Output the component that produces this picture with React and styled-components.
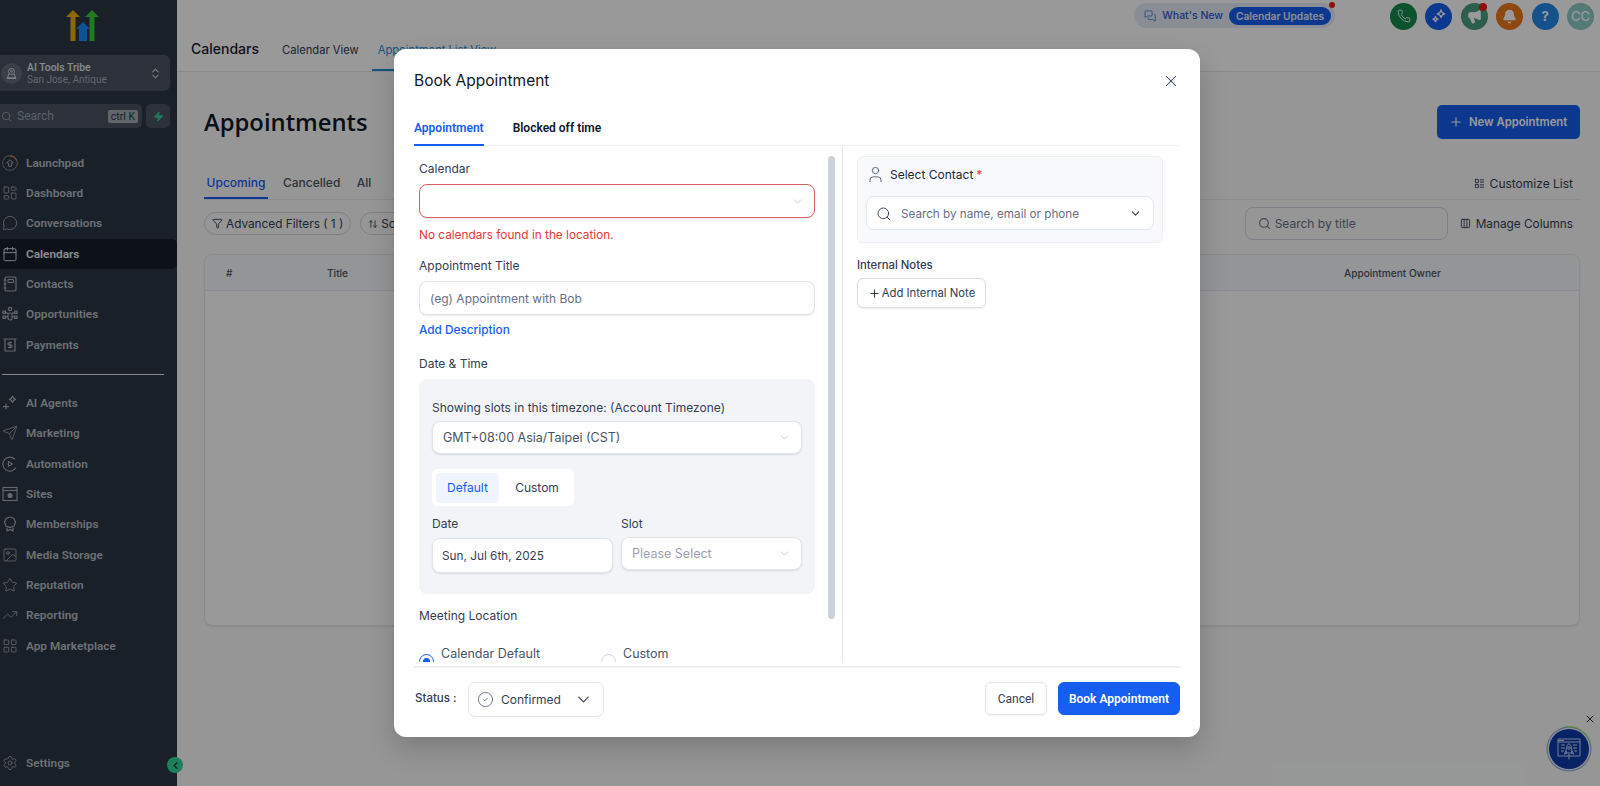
import React from "react";
import styled, { createGlobalStyle } from "styled-components";
import {
  LayoutDashboard, MessageCircle, Calendar, Send, Image as ImageIcon, Star, TrendingUp,
  LayoutGrid, Settings, ChevronsUpDown, Search, Zap, X, ChevronDown, ChevronLeft, Plus, User,
  CircleCheck, Phone, Megaphone, Bell, Filter, ArrowUpDown, Columns3, LayoutList, MessagesSquare,
} from "lucide-react";

const Global = createGlobalStyle`
  html, body { margin: 0; padding: 0; height: 100%; background: #fff; }
  body { font-family: Inter, "Liberation Sans", sans-serif; overflow: hidden; }
  * { box-sizing: border-box; }
`;

const Page = styled.div`
  position: relative;
  display: flex;
  width: 1600px;
  height: 786px;
  overflow: hidden;
  background: #fafbfb;
`;

/* ---------- Sidebar ---------- */
const Side = styled.aside`
  position: relative;
  flex: 0 0 177px;
  display: flex;
  flex-direction: column;
  background: #2b3644;
  font-family: Roboto, sans-serif;
`;
const LogoWrap = styled.div`
  height: 55px;
  padding: 10px 0 0 66px;
`;
const LocationCard = styled.div`
  display: flex;
  align-items: center;
  width: 170px;
  height: 36px;
  background: #4a5361;
  border-radius: 0 6px 6px 0;
  padding: 0 8px 0 1px;
  gap: 5px;
`;
const LocAvatar = styled.div`
  width: 21px;
  height: 21px;
  border-radius: 50%;
  background: #636b78;
  display: flex;
  align-items: center;
  justify-content: center;
  color: #cfd4da;
  flex: none;
`;
const LocText = styled.div`
  flex: 1;
  display: flex;
  flex-direction: column;
  line-height: 12px;
  padding-top: 2px;
`;
const LocName = styled.span`
  font-size: 10.4px;
  font-weight: 500;
  color: #e4e7eb;
`;
const LocSub = styled.span`
  font-size: 10px;
  color: #a4abb6;
`;
const SearchRow = styled.div`
  display: flex;
  gap: 4px;
  margin-top: 13px;
  width: 170px;
  height: 24px;
`;
const SearchBox = styled.div`
  flex: 1;
  display: flex;
  align-items: center;
  gap: 5px;
  background: #4a5361;
  border-radius: 0 5px 5px 0;
  padding: 0 4px 0 1px;
  color: #9aa1ac;
  font-size: 12px;
`;
const Kbd = styled.span`
  margin-left: auto;
  background: #a4a9b0;
  color: #2b3644;
  font-size: 10.5px;
  border-radius: 2px;
  padding: 0 3px;
  line-height: 13px;
`;
const BoltBtn = styled.div`
  flex: 0 0 24px;
  background: #4a5361;
  border-radius: 5px;
  display: flex;
  align-items: center;
  justify-content: center;
  color: #37c78f;
`;
const NavGroup = styled.nav`
  display: grid;
  grid-auto-rows: 30.35px;
  margin-top: ${(p) => p.$top}px;
`;
const NavItem = styled.div`
  display: flex;
  align-items: center;
  gap: 8px;
  padding-left: 2px;
  height: 100%;
  font-size: 11.8px;
  font-weight: 600;
  color: ${(p) => (p.$active ? "#e8ebef" : "#b6bbc2")};
  background: ${(p) => (p.$active ? "#171d29" : "transparent")};
  border-radius: 0 5px 5px 0;
  svg { color: ${(p) => (p.$active ? "#eef0f3" : "#a8adb5")}; flex: none; }
`;
const NavDivider = styled.div`
  height: 1px;
  width: 162px;
  margin: 14.5px 0 0 2px;
  background: #dfe3ea;
`;
const SettingsWrap = styled.div`
  margin-top: auto;
  height: 46px;
`;
const Collapse = styled.div`
  position: absolute;
  left: 167px;
  top: 757px;
  width: 16px;
  height: 16px;
  border-radius: 50%;
  background: #34d399;
  display: flex;
  align-items: center;
  justify-content: center;
  color: #173a30;
`;

/* ---------- Main ---------- */
const Main = styled.main`
  flex: 1;
  min-width: 0;
  display: flex;
  flex-direction: column;
`;
const Header = styled.header`
  height: 72px;
  flex: none;
  background: #fff;
  border-bottom: 1px solid #e2e4e8;
  box-shadow: 0 1px 2px rgba(0, 0, 0, 0.06);
`;
const UtilRow = styled.div`
  height: 32px;
  display: flex;
  align-items: center;
  justify-content: flex-end;
  padding-right: 6px;
`;
const WhatsNew = styled.div`
  position: relative;
  display: flex;
  align-items: center;
  width: 201px;
  height: 25px;
  margin-right: 55px;
  margin-top: -1px;
  padding: 0 4px 0 10px;
  border-radius: 13px;
  background: #e6ebf6;
  color: #2a5cd6;
  font-size: 10.5px;
  font-weight: 500;
  gap: 6px;
  white-space: nowrap;
`;
const UpdatesPill = styled.span`
  height: 18px;
  flex: 0 0 102px;
  margin-left: auto;
  display: flex;
  align-items: center;
  justify-content: center;
  border-radius: 9px;
  background: #155eef;
  color: #e7ecfa;
  font-size: 10.2px;
  font-weight: 600;
  white-space: nowrap;
`;
const Dot = styled.span`
  position: absolute;
  width: ${(p) => p.$s}px;
  height: ${(p) => p.$s}px;
  border-radius: 50%;
  background: #f01818;
  top: ${(p) => p.$t}px;
  right: ${(p) => p.$r}px;
`;
const RoundBtns = styled.div`
  display: flex;
  gap: 8.4px;
`;
const RoundBtn = styled.div`
  position: relative;
  width: 27px;
  height: 27px;
  border-radius: 50%;
  background: ${(p) => p.$bg};
  display: flex;
  align-items: center;
  justify-content: center;
  color: #fff;
  font-size: 13px;
  font-weight: 700;
`;
const CCBtn = styled(RoundBtn)`
  font-weight: 500;
`;
const TabRow = styled.div`
  height: 39px;
  display: flex;
  align-items: stretch;
  padding-left: 14px;
`;
const PageName = styled.div`
  width: 85px;
  font-size: 14px;
  font-weight: 500;
  color: #1a2230;
  padding-top: 8px;
  line-height: 18px;
`;
const TopTab = styled.div`
  padding: 10px 6px 0;
  margin-right: 7px;
  font-size: 11.2px;
  font-weight: 400;
  line-height: 16px;
  color: ${(p) => (p.$active ? "#1f8fd6" : "#344054")};
  border-bottom: 2px solid ${(p) => (p.$active ? "#1f8fd6" : "transparent")};
  white-space: nowrap;
`;
const Body = styled.div`
  flex: 1;
  padding: 33px 20px 0 27px;
  background: #fafbfb;
`;
const TitleRow = styled.div`
  display: flex;
  align-items: center;
  justify-content: space-between;
  height: 34px;
`;
const PageTitle = styled.h1`
  margin: 0;
  font-family: "Open Sans", sans-serif;
  font-size: 23.8px;
  font-weight: 600;
  color: #101828;
`;
const NewBtn = styled.div`
  width: 143px;
  height: 34px;
  display: flex;
  align-items: center;
  gap: 6px;
  padding-left: 12px;
  border-radius: 5px;
  background: #155eef;
  color: #fff;
  font-size: 11.3px;
  font-weight: 600;
  white-space: nowrap;
`;
const SubTabs = styled.div`
  display: flex;
  align-items: flex-end;
  height: 32px;
  margin-top: 29px;
  border-bottom: 1px solid #e8eaee;
  position: relative;
`;
const SubTab = styled.div`
  width: ${(p) => p.$w}px;
  margin-right: ${(p) => p.$mr}px;
  height: 31px;
  padding-top: 7px;
  line-height: 16px;
  text-align: center;
  font-size: 12px;
  font-weight: 500;
  color: ${(p) => (p.$active ? "#155eef" : "#4b5565")};
  border-bottom: 2px solid ${(p) => (p.$active ? "#155eef" : "transparent")};
`;
const Customize = styled.div`
  margin-left: auto;
  margin-right: 7px;
  align-self: center;
  display: flex;
  align-items: center;
  gap: 5px;
  color: #344054;
  font-size: 12px;
  font-weight: 400;
`;
const FilterRow = styled.div`
  display: flex;
  align-items: center;
  height: 33px;
  margin-top: 7px;
  gap: 9px;
`;
const Pill = styled.div`
  height: 23px;
  display: flex;
  align-items: center;
  gap: 3px;
  padding: 0 7px;
  border: 1px solid #d0d5dd;
  border-radius: 12px;
  font-size: 11.8px;
  font-weight: 400;
  color: #344054;
  white-space: nowrap;
`;
const TitleSearch = styled.div`
  margin-left: auto;
  width: 203px;
  height: 33px;
  display: flex;
  align-items: center;
  gap: 4px;
  padding: 0 12px;
  border: 1px solid #d0d5dd;
  border-radius: 8px;
  color: #667085;
  font-size: 12px;
`;
const ManageCols = styled(Customize)`
  margin-left: 3px;
  font-size: 11.8px;
`;
const TableCard = styled.div`
  margin-top: 14px;
  height: 372px;
  border: 1px solid #e4e7ec;
  border-radius: 8px;
  background: #fff;
  box-shadow: 0 1px 2px rgba(0, 0, 0, 0.08);
`;
const TableHead = styled.div`
  height: 36px;
  display: grid;
  grid-template-columns: 101px 1017px 1fr;
  align-items: center;
  padding: 1px 0 0 21px;
  background: #f7f8fa;
  border-bottom: 1px solid #e4e7ec;
  border-radius: 8px 8px 0 0;
  font-size: 10.1px;
  font-weight: 500;
  color: #475467;
`;

/* ---------- Overlay items ---------- */
const Rocket = styled.div`
  position: absolute;
  left: 1549px;
  top: 729px;
  width: 40px;
  height: 40px;
  border-radius: 50%;
  background: #0c3ba8;
  box-shadow: 0 0 0 1.5px #e7ebf3, 0 0 0 2.5px #8ca3dc;
  display: flex;
  align-items: center;
  justify-content: center;
  &::after {
    content: "";
    position: absolute;
    inset: -3px;
    border-radius: 50%;
    border: 1.5px solid transparent;
    border-top-color: #9bf05a;
    transform: rotate(35deg);
  }
`;
const RocketClose = styled.div`
  position: absolute;
  left: 1584px;
  top: 713px;
  color: #2d3340;
  display: flex;
`;
const Overlay = styled.div`
  position: absolute;
  inset: 0;
  background: rgba(0, 0, 0, 0.4);
  padding: 49px 0 0 394px;
`;
const Modal = styled.section`
  width: 806px;
  height: 688px;
  background: #fff;
  border-radius: 12px;
  box-shadow: 0 12px 28px rgba(0, 0, 0, 0.18);
  padding: 0 20px 0 20px;
  display: flex;
  flex-direction: column;
`;
const ModalHead = styled.div`
  display: flex;
  align-items: center;
  justify-content: space-between;
  height: 63px;
  flex: none;
  color: #101828;
`;
const ModalTitle = styled.h2`
  margin: 0;
  font-size: 15.5px;
  font-weight: 400;
  color: #101828;
`;
const CloseBtn = styled.div`
  display: flex;
  color: #344054;
`;
const ModalTabs = styled.div`
  display: flex;
  gap: 29px;
  height: 34px;
  flex: none;
  border-bottom: 1px solid #eef0f3;
`;
const ModalTab = styled.div`
  font-family: Roboto, sans-serif;
  font-size: 12px;
  font-weight: 600;
  height: 34px;
  padding-top: 8px;
  line-height: 16px;
  color: ${(p) => (p.$active ? "#155eef" : "#101828")};
  border-bottom: 2px solid ${(p) => (p.$active ? "#155eef" : "transparent")};
`;
const Split = styled.div`
  flex: 1;
  min-height: 0;
  display: flex;
`;
const LeftPane = styled.div`
  flex: 0 0 429px;
  display: flex;
  gap: 13px;
  padding-left: 5px;
  border-right: 1px solid #e5e7eb;
  height: 516px;
`;
const Form = styled.div`
  flex: 0 0 396px;
  padding-top: 16px;
  height: 516px;
  overflow: hidden;
`;
const Scrollbar = styled.div`
  flex: 0 0 7px;
  height: 463px;
  margin-top: 10px;
  border-radius: 4px;
  background: #cdd3dd;
`;
const Label = styled.div`
  font-size: 12px;
  line-height: 14px;
  height: 16px;
  font-weight: 400;
  color: #344054;
  margin-top: ${(p) => p.$top || 0}px;
`;
const SelectBox = styled.div`
  display: flex;
  align-items: center;
  justify-content: space-between;
  height: ${(p) => p.$h || 33}px;
  margin-top: ${(p) => p.$top || 0}px;
  padding: 0 10px;
  background: #fff;
  border: 1px solid ${(p) => (p.$error ? "#d8605e" : "#e1e4ea")};
  border-width: ${(p) => (p.$error ? "1.5px" : "1px")};
  border-radius: 8px;
  box-shadow: 0 1px 2px rgba(16, 24, 40, 0.1);
  font-size: ${(p) => p.$fs || 12.5}px;
  color: ${(p) => p.$color || "#667085"};
  svg { color: #a9b1bd; flex: none; }
`;
const ErrorText = styled.div`
  margin-top: 9px;
  font-size: 11.8px;
  line-height: 16px;
  height: 16px;
  color: #e5383b;
`;
const LinkText = styled.div`
  margin-top: 8px;
  font-size: 11.8px;
  line-height: 15px;
  height: 16px;
  font-weight: 500;
  color: #155eef;
`;
const SlotPanel = styled.div`
  margin-top: 6px;
  height: 215px;
  padding: 22px 13px 0;
  border-radius: 8px;
  background: #f2f4f7;
`;
const Segment = styled.div`
  display: flex;
  align-items: center;
  margin-top: 15px;
  height: 37px;
  width: 142px;
  padding: 4px;
  border-radius: 6px;
  background: #fff;
  font-size: 12px;
  font-weight: 400;
`;
const SegItem = styled.div`
  height: 30px;
  display: flex;
  align-items: center;
  justify-content: center;
  width: ${(p) => p.$w}px;
  padding-left: ${(p) => (p.$active ? 0 : 5)}px;
  border-radius: 4px;
  background: ${(p) => (p.$active ? "#eff4ff" : "transparent")};
  color: ${(p) => (p.$active ? "#155eef" : "#344054")};
`;
const DateGrid = styled.div`
  display: grid;
  grid-template-columns: 181px 181px;
  column-gap: 8px;
  margin-top: 11px;
`;
const DateBox = styled(SelectBox)`
  padding-left: 9px;
`;
const Radios = styled.div`
  display: flex;
  margin-top: 21px;
`;
const RadioItem = styled.div`
  display: flex;
  gap: 7px;
  width: ${(p) => p.$w}px;
  font-size: 12.5px;
  line-height: 16px;
  color: #475467;
`;
const RadioMark = styled.span`
  flex: none;
  width: 15px;
  height: 15px;
  margin-top: 8px;
  border-radius: 50%;
  border: 1px solid ${(p) => (p.$on ? "#155eef" : "#d0d5dd")};
  display: flex;
  align-items: center;
  justify-content: center;
  &::after {
    content: "";
    width: 7px;
    height: 7px;
    border-radius: 50%;
    background: ${(p) => (p.$on ? "#155eef" : "transparent")};
  }
`;
const RightPane = styled.div`
  flex: 1;
  padding: 10px 0 0 14px;
`;
const ContactCard = styled.div`
  width: 306px;
  height: 87px;
  padding: 8px 8px 0;
  border: 1px solid #eef0f3;
  border-radius: 6px;
  background: #f8f9fb;
`;
const ContactHead = styled.div`
  display: flex;
  align-items: center;
  gap: 5px;
  height: 18px;
  font-size: 12px;
  font-weight: 400;
  color: #1d2939;
  svg { color: #475467; }
`;
const Req = styled.span`
  color: #e5383b;
  margin-left: -2px;
`;
const ContactSearch = styled.div`
  display: flex;
  align-items: center;
  gap: 9px;
  height: 34px;
  margin-top: 13px;
  padding: 1px 11px 0 9px;
  background: #fff;
  border: 1px solid #e4e7ec;
  border-radius: 8px;
  font-size: 11.7px;
  color: #667085;
  svg { color: #344054; flex: none; }
`;
const NotesLabel = styled(Label)`
  margin-top: 15px;
  font-size: 11.3px;
  font-weight: 500;
`;
const AddNote = styled.div`
  width: 129px;
  height: 30px;
  margin-top: 4px;
  display: flex;
  align-items: center;
  justify-content: center;
  gap: 1px;
  border: 1px solid #d8dce3;
  border-radius: 6px;
  box-shadow: 0 1px 2px rgba(16, 24, 40, 0.06);
  font-size: 11.3px;
  font-weight: 400;
  color: #344054;
`;
const Footer = styled.div`
  flex: none;
  height: 71px;
  border-top: 2px solid #eceef1;
  padding-top: 14px;
  display: flex;
  align-items: flex-start;
`;
const StatusLabel = styled.div`
  width: 53px;
  height: 35px;
  padding-left: 1px;
  line-height: 33px;
  font-size: 11.5px;
  font-weight: 500;
  color: #344054;
`;
const StatusSelect = styled.div`
  width: 136px;
  height: 35px;
  margin-left: 1px;
  display: flex;
  align-items: center;
  padding: 0 10px 0 8px;
  gap: 7px;
  border: 1px solid #e1e4ea;
  border-radius: 7px;
  font-size: 12px;
  color: #344054;
  svg:first-child { color: #475467; }
`;
const Actions = styled.div`
  margin-left: auto;
  display: flex;
  gap: 11px;
`;
const CancelBtn = styled.div`
  width: 62px;
  height: 33px;
  display: flex;
  align-items: center;
  justify-content: center;
  border: 1px solid #e1e4ea;
  border-radius: 6px;
  box-shadow: 0 1px 2px rgba(16, 24, 40, 0.06);
  font-family: Roboto, sans-serif;
  font-size: 12px;
  font-weight: 400;
  color: #344054;
`;
const PrimaryBtn = styled(CancelBtn)`
  width: 122px;
  border-color: #155eef;
  background: #155eef;
  color: #fff;
  font-weight: 600;
`;

/* ---------- Drawings ---------- */
const Logo = () => (
  <svg width="33" height="31" viewBox="0 0 33 31">
    <path d="M7 0l7 7h-4.5v24h-5V7H0z" fill="#e9b000" />
    <path d="M26 0l7 7h-4.5v24h-5V7H19z" fill="#37ca37" />
    <path d="M17 12l7 7h-3v12h-8V19h-3z" fill="#188bf6" />
  </svg>
);
const LocIcon = () => (
  <svg width="13" height="13" viewBox="0 0 13 13" fill="none" stroke="currentColor" strokeWidth="1">
    <circle cx="6.5" cy="4.5" r="3" />
    <circle cx="6.5" cy="4.3" r="0.9" />
    <path d="M4 6.800L2 11.500h9L9 6.800M2.500 10.200c2.500.8 5.500.8 8 0" />
  </svg>
);
const LaunchIcon = () => (
  <svg width="16" height="16" viewBox="0 0 17 17" fill="none" stroke="currentColor" strokeWidth="1">
    <circle cx="8.5" cy="8.5" r="7.8" opacity="0.7" />
    <path d="M8.500 1a7.500 7.500 0 0 1 7 5" stroke="#f0803c" strokeWidth="1.2" />
    <path d="M5 8.500l3.500-3.500L12 8.500h-2v3.500H7V8.500z" strokeLinejoin="round" />
  </svg>
);
const ContactIcon = () => (
  <svg width="16" height="16" viewBox="0 0 16 16" fill="none" stroke="currentColor" strokeWidth="1.2">
    <rect x="3" y="1" width="11" height="14" rx="1.5" />
    <rect x="6" y="3.5" width="5.5" height="3" rx="0.7" />
    <path d="M1.500 4h3M1.500 8h3M1.500 12h3" />
  </svg>
);
const OppIcon = () => (
  <svg width="16" height="16" viewBox="0 0 16 16" fill="none" stroke="currentColor" strokeWidth="1.2">
    <circle cx="8" cy="3" r="1.7" />
    <rect x="6" y="7" width="4" height="7" rx="2" />
    <path d="M1 5h2.400v2.400H1zM12.600 5H15v2.400h-2.400zM1 10h2.400v2.400H1zM12.600 10H15v2.400h-2.400zM4 6.400l2 1.200M12 6.400l-2 1.200M4 11l2-.6M12 11l-2-.6" />
  </svg>
);
const PayIcon = () => (
  <svg width="16" height="16" viewBox="0 0 16 16" fill="none" stroke="currentColor" strokeWidth="1.2">
    <path d="M1.500 2h13M3 2v12h10V2" />
    <path d="M10 5.500H7.200a1.200 1.200 0 0 0 0 2.500h1.600a1.200 1.200 0 0 1 0 2.500H6M8 4.500v7" />
  </svg>
);
const AgentIcon = () => (
  <svg width="16" height="16" viewBox="0 0 16 16" fill="none" stroke="currentColor" strokeWidth="1.2" strokeLinejoin="round">
    <path d="M10.500 1.200c.4 2 1 2.700 3 3.200-2 .5-2.600 1.100-3 3.100-.5-2-1.100-2.600-3.100-3.100 2-.5 2.600-1.200 3.100-3.200z" />
    <path d="M4 8.600v6M1 11.600h6" />
  </svg>
);
const AutoIcon = () => (
  <svg width="16" height="16" viewBox="0 0 16 16" fill="none" stroke="currentColor" strokeWidth="1.1">
    <path d="M13 3.400A7 7 0 1 0 14 11.500" />
    <path d="M6.400 5.600l4 2.400-4 2.400z" strokeLinejoin="round" />
  </svg>
);
const SiteIcon = () => (
  <svg width="16" height="16" viewBox="0 0 16 16" fill="none" stroke="currentColor" strokeWidth="1.1">
    <rect x="1" y="1.5" width="14" height="13" />
    <path d="M1 4.500h14" />
    <circle cx="8" cy="9.5" r="2" fill="currentColor" />
  </svg>
);
const MemberIcon = () => (
  <svg width="16" height="16" viewBox="0 0 16 16" fill="none" stroke="currentColor" strokeWidth="1.2" strokeLinejoin="round">
    <path d="M8 1c1.200 0 1.600.8 2.600.9 1 .1 1.800.8 1.900 1.800.1 1 .9 1.500.9 2.500s-.8 1.500-.9 2.500c-.1 1-.9 1.700-1.900 1.800-1 .1-1.400.9-2.600.9s-1.600-.8-2.600-.9c-1-.1-1.800-.8-1.900-1.800C3.400 7.700 2.600 7.200 2.600 6.200s.8-1.500.9-2.500c.1-1 .9-1.700 1.900-1.800C6.400 1.800 6.800 1 8 1z" />
    <path d="M5 11.500V15l3-1.500 3 1.500v-3.500" />
  </svg>
);
const StarsIcon = () => (
  <svg width="15" height="15" viewBox="0 0 15 15" fill="none" stroke="currentColor" strokeWidth="1.3" strokeLinejoin="round">
    <path d="M10 1c.4 2.500 1.300 3.400 3.800 3.800C11.300 5.200 10.400 6.100 10 8.600 9.600 6.100 8.700 5.200 6.200 4.800 8.700 4.400 9.600 3.500 10 1z" />
    <path d="M4.500 7.500c.3 1.700.9 2.300 2.600 2.600-1.700.3-2.300.9-2.600 2.600-.3-1.700-.9-2.300-2.600-2.600 1.700-.3 2.300-.9 2.600-2.600z" />
  </svg>
);
const RocketIcon = () => (
  <svg width="28" height="28" viewBox="0 0 28 28" fill="none" stroke="#c3d2f5" strokeWidth="1">
    <path d="M3 4h22v17H3zM3 7h22M3 5.500h6M6 10h4M6 13h4M6 16h3M18 10h4M18 13h4M19 16h3" />
    <path d="M14 8.500c2.500 2 3.200 5 2.600 9.500h-5.200C10.800 13.500 11.500 10.500 14 8.500zM11.400 15.500l-2.200 3.500 2.500-.6M16.600 15.500l2.200 3.500-2.500-.6M14 18.500v6" fill="#0c3ba8" />
    <circle cx="14" cy="13" r="1.3" />
  </svg>
);

const topNav = [
  ["Launchpad", <LaunchIcon />],
  ["Dashboard", <LayoutDashboard size={16} strokeWidth={1.2} />],
  ["Conversations", <MessageCircle size={16} strokeWidth={1.2} />],
  ["Calendars", <Calendar size={16} strokeWidth={1.3} />, true],
  ["Contacts", <ContactIcon />],
  ["Opportunities", <OppIcon />],
  ["Payments", <PayIcon />],
];
const bottomNav = [
  ["AI Agents", <AgentIcon />],
  ["Marketing", <Send size={16} strokeWidth={1.2} />],
  ["Automation", <AutoIcon />],
  ["Sites", <SiteIcon />],
  ["Memberships", <MemberIcon />],
  ["Media Storage", <ImageIcon size={16} strokeWidth={1.2} />],
  ["Reputation", <Star size={16} strokeWidth={1.2} />],
  ["Reporting", <TrendingUp size={16} strokeWidth={1.2} />],
  ["App Marketplace", <LayoutGrid size={16} strokeWidth={1.2} />],
];
const rounds = [
  ["#118a4b", <Phone size={14} strokeWidth={1.5} />],
  ["#155eef", <StarsIcon />],
  ["#4b9b7e", <Megaphone size={15} fill="#fff" />, true],
  ["#ec7a1a", <Bell size={15} fill="#fff" />],
  ["#2488e8", "?"],
];

export default function App() {
  return (
    <Page>
      <Global />
      <Side>
        <LogoWrap><Logo /></LogoWrap>
        <LocationCard>
          <LocAvatar><LocIcon /></LocAvatar>
          <LocText>
            <LocName>AI Tools Tribe</LocName>
            <LocSub>San Jose, Antique</LocSub>
          </LocText>
          <ChevronsUpDown size={13} color="#c7ccd3" />
        </LocationCard>
        <SearchRow>
          <SearchBox>
            <Search size={11} />
            Search
            <Kbd>ctrl K</Kbd>
          </SearchBox>
          <BoltBtn><Zap size={11} fill="currentColor" /></BoltBtn>
        </SearchRow>
        <NavGroup $top={19.5}>
          {topNav.map(([t, icon, active]) => (
            <NavItem key={t} $active={active}>{icon}{t}</NavItem>
          ))}
        </NavGroup>
        <NavDivider />
        <NavGroup $top={12.5}>
          {bottomNav.map(([t, icon]) => (
            <NavItem key={t}>{icon}{t}</NavItem>
          ))}
        </NavGroup>
        <SettingsWrap>
          <NavItem><Settings size={16} strokeWidth={1.2} />Settings</NavItem>
        </SettingsWrap>
        <Collapse><ChevronLeft size={11} strokeWidth={2.5} /></Collapse>
      </Side>
      <Main>
        <Header>
          <UtilRow>
            <WhatsNew>
              <MessagesSquare size={14} strokeWidth={1.4} />
              What's New
              <UpdatesPill>Calendar Updates</UpdatesPill>
              <Dot $s={6} $t={-1} $r={0} />
            </WhatsNew>
            <RoundBtns>
              {rounds.map(([bg, c, dot], i) => (
                <RoundBtn key={i} $bg={bg}>
                  {c}
                  {dot && <Dot $s={8} $t={0} $r={1} />}
                </RoundBtn>
              ))}
              <CCBtn $bg="#8ecac3">CC</CCBtn>
            </RoundBtns>
          </UtilRow>
          <TabRow>
            <PageName>Calendars</PageName>
            <TopTab>Calendar View</TopTab>
            <TopTab $active>Appointment List View</TopTab>
          </TabRow>
        </Header>
        <Body>
          <TitleRow>
            <PageTitle>Appointments</PageTitle>
            <NewBtn><Plus size={14} />New Appointment</NewBtn>
          </TitleRow>
          <SubTabs>
            <SubTab $w={64} $mr={15} $active>Upcoming</SubTab>
            <SubTab $w={56} $mr={17}>Cancelled</SubTab>
            <SubTab $w={16} $mr={0}>All</SubTab>
            <Customize><LayoutList size={11} />Customize List</Customize>
          </SubTabs>
          <FilterRow>
            <Pill><Filter size={11} />Advanced Filters ( 1 )</Pill>
            <Pill><ArrowUpDown size={10} />Sort</Pill>
            <TitleSearch><Search size={13} />Search by title</TitleSearch>
            <ManageCols><Columns3 size={11} />Manage Columns</ManageCols>
          </FilterRow>
          <TableCard>
            <TableHead>
              <span>#</span>
              <span>Title</span>
              <span>Appointment Owner</span>
            </TableHead>
          </TableCard>
        </Body>
      </Main>
      <RocketClose><X size={12} /></RocketClose>
      <Rocket><RocketIcon /></Rocket>
      <Overlay>
        <Modal>
          <ModalHead>
            <ModalTitle>Book Appointment</ModalTitle>
            <CloseBtn><X size={18} strokeWidth={1.4} /></CloseBtn>
          </ModalHead>
          <ModalTabs>
            <ModalTab $active>Appointment</ModalTab>
            <ModalTab>Blocked off time</ModalTab>
          </ModalTabs>
          <Split>
            <LeftPane>
              <Form>
                <Label>Calendar</Label>
                <SelectBox $error $h={34} $top={6}><span /><ChevronDown size={13} strokeWidth={1.2} /></SelectBox>
                <ErrorText>No calendars found in the location.</ErrorText>
                <Label $top={16}>Appointment Title</Label>
                <SelectBox $h={34} $top={6} $fs={12}>(eg) Appointment with Bob</SelectBox>
                <LinkText>Add Description</LinkText>
                <Label $top={18}>Date &amp; Time</Label>
                <SlotPanel>
                  <Label>Showing slots in this timezone: (Account Timezone)</Label>
                  <SelectBox $top={4} $color="#475467">
                    GMT+08:00 Asia/Taipei (CST)
                    <ChevronDown size={13} strokeWidth={1.2} />
                  </SelectBox>
                  <Segment>
                    <SegItem $w={63} $active>Default</SegItem>
                    <SegItem $w={71}>Custom</SegItem>
                  </Segment>
                  <DateGrid>
                    <Label>Date</Label>
                    <Label>Slot</Label>
                    <DateBox $h={35} $top={5} $fs={11.8} $color="#344054">Sun, Jul 6th, 2025</DateBox>
                    <SelectBox $top={4} $color="#98a2b3">
                      Please Select
                      <ChevronDown size={13} strokeWidth={1.2} />
                    </SelectBox>
                  </DateGrid>
                </SlotPanel>
                <Label $top={15}>Meeting Location</Label>
                <Radios>
                  <RadioItem $w={182}><RadioMark $on />Calendar Default</RadioItem>
                  <RadioItem $w={120}><RadioMark />Custom</RadioItem>
                </Radios>
              </Form>
              <Scrollbar />
            </LeftPane>
            <RightPane>
              <ContactCard>
                <ContactHead>
                  <User size={19} strokeWidth={1.1} />
                  Select Contact <Req>*</Req>
                </ContactHead>
                <ContactSearch>
                  <Search size={16} strokeWidth={1.4} />
                  <span>Search by name, email or phone</span>
                  <ChevronDown size={13} style={{ marginLeft: "auto" }} />
                </ContactSearch>
              </ContactCard>
              <NotesLabel>Internal Notes</NotesLabel>
              <AddNote><Plus size={13} />Add Internal Note</AddNote>
            </RightPane>
          </Split>
          <Footer>
            <StatusLabel>Status :</StatusLabel>
            <StatusSelect>
              <CircleCheck size={17} strokeWidth={1.1} />
              <span>Confirmed</span>
              <ChevronDown size={19} strokeWidth={1.4} style={{ marginLeft: "auto" }} />
            </StatusSelect>
            <Actions>
              <CancelBtn>Cancel</CancelBtn>
              <PrimaryBtn>Book Appointment</PrimaryBtn>
            </Actions>
          </Footer>
        </Modal>
      </Overlay>
    </Page>
  );
}
